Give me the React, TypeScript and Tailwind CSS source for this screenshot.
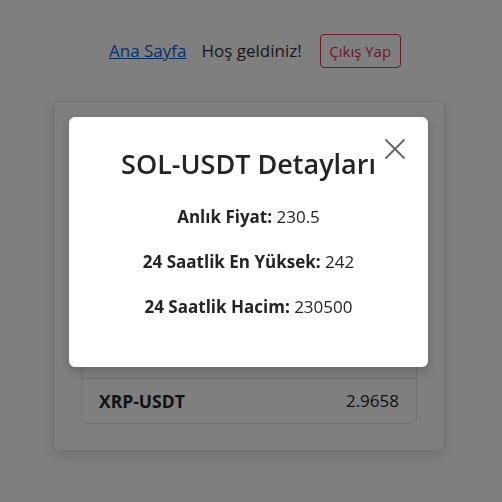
import { X } from "lucide-react";

const coins = [
  { symbol: "BTC-USDT", price: "108250.1" },
  { symbol: "ETH-USDT", price: "2548.32" },
  { symbol: "SOL-USDT", price: "230.5" },
  { symbol: "BNB-USDT", price: "662.4" },
  { symbol: "XRP-USDT", price: "2.9658" },
];

export default function App() {
  return (
    <div className="relative min-h-[502px] bg-white text-[#212529] font-['Open_Sans',sans-serif]">
      {/* header */}
      <div className="flex items-center pl-[109px] pt-[34px]">
        <a href="#" className="text-[17px] text-[#0d5fd0] underline">
          Ana Sayfa
        </a>
        <span className="ml-[15px] text-[17px] text-[#333]">Hoş geldiniz!</span>
        <button className="ml-[18px] h-[34px] w-[81px] rounded-[4px] border border-[#dc3545] text-[15px] text-[#dc3545]">
          Çıkış Yap
        </button>
      </div>

      {/* coin card */}
      <div className="ml-[53px] mr-[57px] mt-[33px] h-[350px] rounded-[6px] border border-[#e3e3e3] bg-white px-[27px] pt-[28px] shadow-[0_4px_14px_rgba(0,0,0,0.12)]">
        <h2 className="mb-[31px] text-center text-[24px] font-semibold">Kripto Fiyatları</h2>
        <div className="rounded-[6px] border border-[#dee2e6]">
          {coins.map((c, i) => (
            <div
              key={c.symbol}
              className={`flex h-[45px] items-center justify-between pl-[17px] pr-[17px] ${i > 0 ? "border-t border-[#dee2e6]" : ""}`}
            >
              <span className="text-[17.5px] font-bold">{c.symbol}</span>
              <span className="text-[17px]">{c.price}</span>
            </div>
          ))}
        </div>
      </div>

      {/* overlay + modal */}
      <div className="fixed inset-0 bg-black/50">
        <div className="relative ml-[69px] mt-[117px] h-[250px] w-[359px] rounded-[6px] bg-white px-[20px] pt-[27px] shadow-[0_4px_12px_rgba(0,0,0,0.2)]">
          <button className="absolute right-[15px] top-[14px] text-[#666]">
            <X size={36} strokeWidth={1.25} />
          </button>
          <h3 className="text-center text-[27px] font-semibold leading-[40px]">SOL-USDT Detayları</h3>
          <div className="mt-[21px] flex flex-col items-center gap-[21px] text-[17px] leading-[24px]">
            <p>
              <b>Anlık Fiyat:</b> 230.5
            </p>
            <p>
              <b>24 Saatlik En Yüksek:</b> 242
            </p>
            <p>
              <b>24 Saatlik Hacim:</b> 230500
            </p>
          </div>
        </div>
      </div>
    </div>
  );
}
